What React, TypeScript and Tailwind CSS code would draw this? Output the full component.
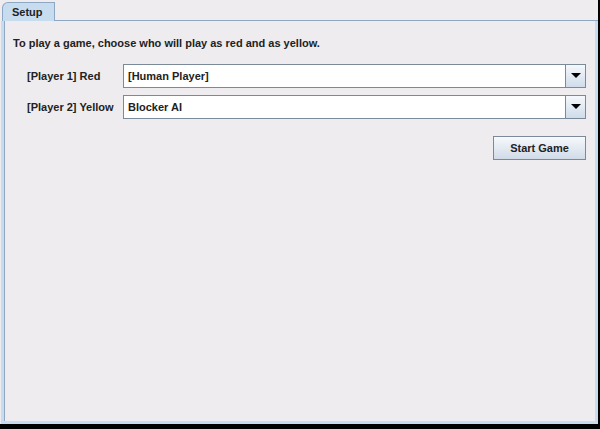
import React from "react";

const font = { fontFamily: '"Liberation Sans", Arial, sans-serif' };

function Arrow() {
  return (
    <svg width="10" height="6" viewBox="0 0 10 6">
      <polygon points="0,0 10,0 5,5" fill="#000" />
    </svg>
  );
}

function Combo({ value }: { value: string }) {
  return (
    <div className="flex h-[24px] flex-1 border border-[#7a8a99] bg-[#eeeeee]">
      <div className="flex flex-1 items-center border border-white bg-white pl-[3px] text-[11px] font-bold text-[#222222]">
        {value}
      </div>
      <div className="flex w-[20px] items-center justify-center border-l border-[#7a8a99] bg-gradient-to-b from-[#f5f8fc] to-[#cfdcea]">
        <Arrow />
      </div>
    </div>
  );
}

export default function App() {
  return (
    <div className="h-[429px] w-[600px] bg-black" style={font}>
      <div className="flex h-[424px] w-[598px] flex-col bg-[#eeecee] pl-[1px]">
        <div className="flex h-[21px] items-end pl-[1px] pt-[2px]">
          <div className="flex h-[19px] w-[53px] items-center rounded-tl-[6px] border border-b-0 border-[#8ea8c4] bg-[#c8dcf0] pl-[9px] text-[11px] font-bold text-[#222222]">
            Setup
          </div>
          <div className="h-[1px] flex-1 bg-[#8ea8c4]" />
        </div>
        <div className="flex flex-1 flex-col border-x-[3px] border-b-[3px] border-[#c8dcf0] bg-[#eeecee]">
          <div className="flex flex-1 flex-col border-l border-[#8ea8c4] px-[8px] pt-[15px]">
            <div className="text-[11px] font-bold leading-[14px] text-[#222222]">
              To play a game, choose who will play as red and as yellow.
            </div>
            <div className="mt-[14px] flex flex-col gap-[7px] pl-[14px] pr-[1px]">
              <div className="flex items-center">
                <div className="w-[96px] text-[11px] font-bold text-[#222222]">[Player 1] Red</div>
                <Combo value="[Human Player]" />
              </div>
              <div className="flex items-center">
                <div className="w-[96px] text-[11px] font-bold text-[#222222]">[Player 2] Yellow</div>
                <Combo value="Blocker AI" />
              </div>
              <div className="mt-[10px] flex justify-end">
                <button className="h-[24px] w-[93px] border border-[#7a8a99] bg-gradient-to-b from-[#f7f9fc] to-[#d0dbe8] text-[11px] font-bold text-[#222222]">
                  Start Game
                </button>
              </div>
            </div>
          </div>
        </div>
      </div>
    </div>
  );
}
